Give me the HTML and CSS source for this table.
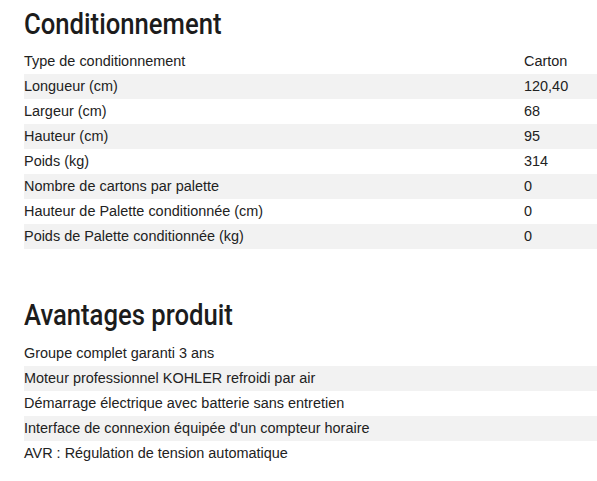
FILE: index.html
```html
<!DOCTYPE html>
<html lang="fr">
<head>
<meta charset="utf-8">
<title>Conditionnement</title>
<link rel="stylesheet" href="styles.css">
</head>
<body>
<section class="block">
  <h2 class="title">Conditionnement</h2>
  <div class="table">
    <div class="row"><span class="label">Type de conditionnement</span><span class="value">Carton</span></div>
    <div class="row"><span class="label">Longueur (cm)</span><span class="value">120,40</span></div>
    <div class="row"><span class="label">Largeur (cm)</span><span class="value">68</span></div>
    <div class="row"><span class="label">Hauteur (cm)</span><span class="value">95</span></div>
    <div class="row"><span class="label">Poids (kg)</span><span class="value">314</span></div>
    <div class="row"><span class="label">Nombre de cartons par palette</span><span class="value">0</span></div>
    <div class="row"><span class="label">Hauteur de Palette conditionnée (cm)</span><span class="value">0</span></div>
    <div class="row"><span class="label">Poids de Palette conditionnée (kg)</span><span class="value">0</span></div>
  </div>
</section>
<section class="block block-second">
  <h2 class="title">Avantages produit</h2>
  <div class="table">
    <div class="row"><span class="label">Groupe complet garanti 3 ans</span></div>
    <div class="row"><span class="label">Moteur professionnel KOHLER refroidi par air</span></div>
    <div class="row"><span class="label">Démarrage électrique avec batterie sans entretien</span></div>
    <div class="row"><span class="label">Interface de connexion équipée d'un compteur horaire</span></div>
    <div class="row"><span class="label">AVR : Régulation de tension automatique</span></div>
  </div>
</section>
</body>
</html>
```

FILE: styles.css
```css
html, body {
  margin: 0;
  padding: 0;
  background: #ffffff;
}
body {
  padding-left: 24px;
  font-family: "Liberation Sans", Arial, sans-serif;
  font-size: 14.45px;
  color: #222222;
}
.block {
  padding-top: 7px;
}
.block-second {
  padding-top: 49px;
}
.title {
  margin: 0 0 8px 0;
  font-family: Roboto, "Liberation Sans", Arial, sans-serif;
  font-weight: 500;
  font-size: 29.5px;
  line-height: 34px;
  color: #1c1c1c;
  transform: scaleX(0.87);
  transform-origin: left center;
  white-space: nowrap;
}
.block-second .title {
  margin-bottom: 9px;
}
.table {
  display: flex;
  flex-direction: column;
}
.row {
  display: flex;
  height: 25px;
  line-height: 25px;
}
.row:nth-child(even) {
  background: #f2f2f2;
}
.label {
  width: 500px;
  flex: none;
  white-space: nowrap;
}
.value {
  flex: 1;
  white-space: nowrap;
}
```
